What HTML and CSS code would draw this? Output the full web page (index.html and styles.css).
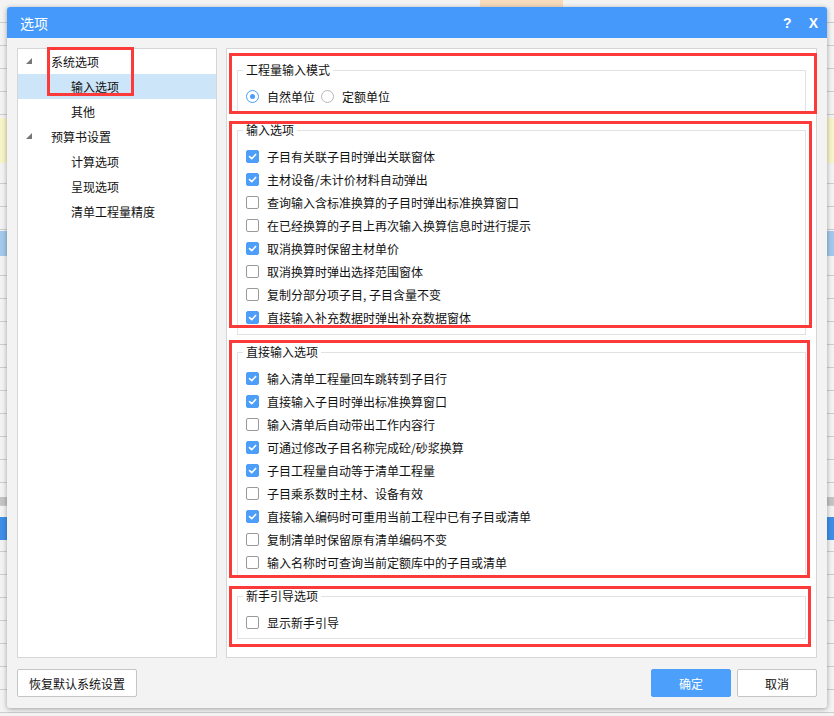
FILE: index.html
```html
<!DOCTYPE html>
<html lang="zh-CN">
<head>
<meta charset="utf-8">
<title>选项</title>
<link rel="stylesheet" href="styles.css">
</head>
<body>
<div class="dialog">
  <div class="titlebar">
    <span class="title">选项</span>
    <span class="tb-btns"><span class="tb-help">?</span><span class="tb-close">X</span></span>
  </div>
  <div class="dlg-body">
    <div class="panels">
      <div class="tree">
        <div class="node l1"><span class="tri"></span>系统选项</div>
        <div class="node l2 sel">输入选项</div>
        <div class="node l2">其他</div>
        <div class="node l1"><span class="tri"></span>预算书设置</div>
        <div class="node l2">计算选项</div>
        <div class="node l2">呈现选项</div>
        <div class="node l2">清单工程量精度</div>
      </div>
      <div class="content">
        <fieldset class="grp g1">
          <legend>工程量输入模式</legend>
          <div class="row">
            <span class="radio on"></span><span class="lbl">自然单位</span>
            <span class="radio"></span><span class="lbl">定额单位</span>
          </div>
        </fieldset>
        <fieldset class="grp g2">
          <legend>输入选项</legend>
          <div class="row"><span class="cb on"><svg viewBox="0 0 13 13"><path d="M3 6.6 L5.6 9.1 L10.2 4.1"/></svg></span>子目有关联子目时弹出关联窗体</div>
          <div class="row"><span class="cb on"><svg viewBox="0 0 13 13"><path d="M3 6.6 L5.6 9.1 L10.2 4.1"/></svg></span>主材设备/未计价材料自动弹出</div>
          <div class="row"><span class="cb"></span>查询输入含标准换算的子目时弹出标准换算窗口</div>
          <div class="row"><span class="cb"></span>在已经换算的子目上再次输入换算信息时进行提示</div>
          <div class="row"><span class="cb on"><svg viewBox="0 0 13 13"><path d="M3 6.6 L5.6 9.1 L10.2 4.1"/></svg></span>取消换算时保留主材单价</div>
          <div class="row"><span class="cb"></span>取消换算时弹出选择范围窗体</div>
          <div class="row"><span class="cb"></span>复制分部分项子目, 子目含量不变</div>
          <div class="row"><span class="cb on"><svg viewBox="0 0 13 13"><path d="M3 6.6 L5.6 9.1 L10.2 4.1"/></svg></span>直接输入补充数据时弹出补充数据窗体</div>
        </fieldset>
        <fieldset class="grp g3">
          <legend>直接输入选项</legend>
          <div class="row"><span class="cb on"><svg viewBox="0 0 13 13"><path d="M3 6.6 L5.6 9.1 L10.2 4.1"/></svg></span>输入清单工程量回车跳转到子目行</div>
          <div class="row"><span class="cb on"><svg viewBox="0 0 13 13"><path d="M3 6.6 L5.6 9.1 L10.2 4.1"/></svg></span>直接输入子目时弹出标准换算窗口</div>
          <div class="row"><span class="cb"></span>输入清单后自动带出工作内容行</div>
          <div class="row"><span class="cb on"><svg viewBox="0 0 13 13"><path d="M3 6.6 L5.6 9.1 L10.2 4.1"/></svg></span>可通过修改子目名称完成砼/砂浆换算</div>
          <div class="row"><span class="cb on"><svg viewBox="0 0 13 13"><path d="M3 6.6 L5.6 9.1 L10.2 4.1"/></svg></span>子目工程量自动等于清单工程量</div>
          <div class="row"><span class="cb"></span>子目乘系数时主材、设备有效</div>
          <div class="row"><span class="cb on"><svg viewBox="0 0 13 13"><path d="M3 6.6 L5.6 9.1 L10.2 4.1"/></svg></span>直接输入编码时可重用当前工程中已有子目或清单</div>
          <div class="row"><span class="cb"></span>复制清单时保留原有清单编码不变</div>
          <div class="row"><span class="cb"></span>输入名称时可查询当前定额库中的子目或清单</div>
        </fieldset>
        <fieldset class="grp g4">
          <legend>新手引导选项</legend>
          <div class="row"><span class="cb"></span>显示新手引导</div>
        </fieldset>
      </div>
    </div>
    <div class="footer">
      <button class="btn reset">恢复默认系统设置</button>
      <span class="spacer"></span>
      <button class="btn primary">确定</button>
      <button class="btn cancel">取消</button>
    </div>
  </div>
</div>
<div class="mark m1"></div>
<div class="mark m2"></div>
<div class="mark m3"></div>
<div class="mark m4"></div>
<div class="mark m5"></div>
</body>
</html>
```

FILE: styles.css
```css
* { box-sizing: border-box; }

html, body { margin: 0; }

body {
  position: relative;
  width: 834px;
  height: 716px;
  overflow: hidden;
  padding: 7px 0 0 7px;
  font-family: "Noto Sans CJK SC", "Noto Sans", sans-serif;
  font-size: 12px;
  color: #111;
  background-color: #f0f0f0;
  background-image:
    linear-gradient(to bottom, rgba(0,0,0,0) 118px, #f7f4c9 118px, #f7f4c9 163px, rgba(0,0,0,0) 163px, rgba(0,0,0,0) 231px, #a4c9ec 231px, #a4c9ec 256px, rgba(0,0,0,0) 256px, rgba(0,0,0,0) 497px, #c4c4c4 497px, #c4c4c4 505px, rgba(0,0,0,0) 505px, rgba(0,0,0,0) 517px, #3f8fe8 517px, #3f8fe8 540px, rgba(0,0,0,0) 540px),
    linear-gradient(to right, rgba(0,0,0,0) 480px, #f6dcbc 480px, #f6dcbc 563px, rgba(0,0,0,0) 563px),
    repeating-linear-gradient(to bottom, #f3f3f3 0, #f3f3f3 22px, #cdcdcd 22px, #cdcdcd 23px);
  background-size: 100% 100%, 100% 7px, 100% 100%;
  background-repeat: no-repeat, no-repeat, repeat;
}

.dialog {
  width: 820px;
  height: 701px;
  display: flex;
  flex-direction: column;
  background: #f3f3f3;
  border-radius: 3px;
  box-shadow: 0 1px 5px rgba(0, 0, 0, 0.35);
}

.titlebar {
  height: 31px;
  flex: none;
  display: flex;
  align-items: center;
  padding: 0 9px 0 13px;
  background: #4499fa;
  color: #fff;
  border-radius: 3px 3px 0 0;
}

.title { font-size: 14px; }

.tb-btns {
  margin-left: auto;
  display: flex;
  align-items: center;
  gap: 17px;
  font-family: "Liberation Sans", sans-serif;
  font-weight: bold;
  font-size: 14px;
}

.dlg-body {
  flex: 1;
  display: flex;
  flex-direction: column;
  padding: 10px 10px 11px 10px;
}

.panels {
  height: 610px;
  display: flex;
  gap: 9px;
}

.tree {
  width: 200px;
  background: #fff;
  border: 1px solid #d6d6d6;
}

.node {
  height: 25px;
  display: flex;
  align-items: center;
  white-space: nowrap;
}

.node.l1 { padding-left: 8px; }
.node.l2 { padding-left: 53px; }
.node.sel { background: #cce5f8; }

.tri {
  width: 0;
  height: 0;
  border-left: 6px solid transparent;
  border-bottom: 6px solid #777;
  margin-right: 19px;
  margin-top: -1px;
}

.content {
  width: 591px;
  background: #fff;
  border: 1px solid #d6d6d6;
  padding: 0 10px;
}

.grp {
  margin: 0;
  border: 1px solid #e2e2e2;
  padding: 7px 8px 3px 8px;
  min-width: 0;
}

.grp legend {
  padding: 0 3px;
  margin-left: -3px;
  line-height: 16px;
  font-size: 12px;
}

.g1 { margin-top: 13px; }
.g2 { margin-top: 10px; padding-bottom: 5px; }
.g3 { margin-top: 9px; padding-bottom: 3px; }
.g4 { margin-top: 10px; padding-bottom: 4px; }

.row {
  height: 23px;
  display: flex;
  align-items: center;
  white-space: nowrap;
}

.cb {
  width: 13px;
  height: 13px;
  flex: none;
  margin-right: 8px;
  border: 1px solid #9a9a9a;
  border-radius: 2px;
  background: #fff;
  display: flex;
}

.cb.on {
  border-color: #4c9ef8;
  background: #4c9ef8;
}

.cb svg {
  width: 11px;
  height: 11px;
}

.cb svg path {
  fill: none;
  stroke: #fff;
  stroke-width: 1.9;
  stroke-linecap: round;
  stroke-linejoin: round;
}

.radio {
  width: 13px;
  height: 13px;
  flex: none;
  margin-right: 8px;
  border: 1px solid #b8b8b8;
  border-radius: 50%;
  background: #fff;
  display: flex;
  align-items: center;
  justify-content: center;
}

.radio.on { border-color: #4c9ef8; }

.radio.on::after {
  content: "";
  width: 5px;
  height: 5px;
  border-radius: 50%;
  background: #4c9ef8;
}

.lbl { margin-right: 6px; }

.footer {
  margin-top: 11px;
  height: 28px;
  display: flex;
  align-items: center;
}

.spacer { flex: 1; }

.btn {
  height: 28px;
  padding: 0;
  border: 1px solid #c6c6c6;
  border-radius: 2px;
  background: #fff;
  color: #111;
  font-family: "Noto Sans CJK SC", "Noto Sans", sans-serif;
  font-size: 12px;
}

.btn.reset { width: 120px; }

.btn.primary {
  width: 80px;
  border-color: #4ca0fb;
  background: #4ca0fb;
  color: #fff;
}

.btn.cancel {
  width: 80px;
  margin-left: 6px;
}

.mark {
  position: absolute;
  border: 3px solid #fc3a3a;
}

.m1 { left: 47px; top: 47px; width: 87px; height: 49px; }
.m2 { left: 229px; top: 53px; width: 588px; height: 61px; }
.m3 { left: 229px; top: 121px; width: 583px; height: 207px; }
.m4 { left: 229px; top: 340px; width: 581px; height: 238px; }
.m5 { left: 229px; top: 586px; width: 582px; height: 61px; }
```
